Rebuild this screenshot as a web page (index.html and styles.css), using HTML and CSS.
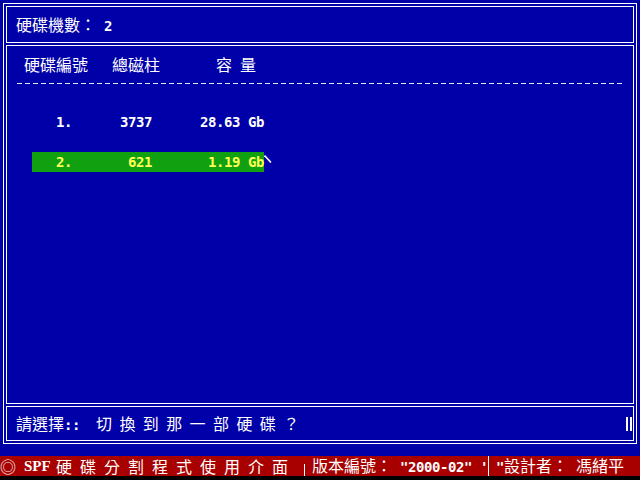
FILE: index.html
```html
<!DOCTYPE html>
<html lang="zh-Hant">
<head>
<meta charset="utf-8">
<title>SPF 硬碟分割程式</title>
<link rel="stylesheet" href="styles.css">
</head>
<body>
<div class="frame">
  <div class="box hdr"><span class="txt">硬碟機數：<span class="m"> 2</span></span></div>
  <div class="box main">
    <div class="cols">
      <span class="col1">硬碟編號</span>
      <span class="col2">總磁柱</span>
      <span class="col3">容<span class="m"> </span>量</span>
    </div>
    <div class="dash"></div>
    <div class="rows">
      <div class="row">
        <div class="bar m"><span class="idx">1.</span><span class="cyl">3737</span><span class="size">28.63 Gb</span></div>
      </div>
      <div class="row sel">
        <div class="bar m"><span class="idx">2.</span><span class="cyl">621</span><span class="size">1.19 Gb</span></div>
        <svg class="ptr" width="8" height="20" viewBox="0 0 8 20"><path d="M0.5 3.5 L7 10.5" stroke="#fff" stroke-width="1.6" fill="none"/></svg>
      </div>
    </div>
  </div>
  <div class="box prm">
    <span class="txt">請選擇<span class="m">::</span><span class="ask">切換到那一部硬碟？</span></span>
    <span class="cursor"><i></i><i></i></span>
  </div>
</div>
<div class="foot">
  <span class="logo">◎</span>
  <span class="spf">SPF</span>
  <span class="title">硬碟分割程式使用介面</span>
  <span class="vb"></span>
  <span class="txt">版本編號：<span class="m"> "2000-02" '</span></span>
  <span class="vb tall"></span>
  <span class="txt"><span class="m">"</span>設計者：<span class="m"> </span>馮緒平</span>
</div>
<div class="bottom"></div>
</body>
</html>
```

FILE: styles.css
```css
* { box-sizing: border-box; margin: 0; padding: 0; }
html, body { width: 640px; height: 480px; overflow: hidden; }
body {
  background: #0000a8;
  color: #fff;
  font-family: "Noto Sans CJK TC", "Liberation Mono", monospace;
  font-size: 16px;
  line-height: 16px;
  display: flex;
  flex-direction: column;
}
.txt { white-space: pre; }
.m {
  font-family: "DejaVu Sans Mono", monospace;
  font-weight: bold;
  font-size: 14px;
  letter-spacing: -0.43px;
  white-space: pre;
}
.frame {
  margin: 3px 3px 0 3px;
  height: 441px;
  border: 1px solid #fff;
  padding: 2px;
  display: flex;
  flex-direction: column;
  gap: 2px;
}
.box { border: 1px solid #fff; }
.hdr {
  height: 37px;
  display: flex;
  align-items: center;
  padding: 1px 0 0 9px;
}
.main { height: 359px; padding-top: 10px; }
.cols { display: flex; height: 16px; padding-left: 17px; }
.col1 { width: 88px; }
.col2 { width: 104px; }
.dash {
  margin: 11px 0 0 10px;
  width: 606px;
  height: 1px;
  background: repeating-linear-gradient(90deg, #e8e8ff 0 5px, transparent 5px 8px);
}
.rows {
  margin: 28px 0 0 25px;
  display: flex;
  flex-direction: column;
  gap: 20px;
}
.row { display: flex; align-items: center; height: 20px; }
.bar { display: flex; align-items: center; width: 232px; height: 20px; }
.sel .bar { background: #10a010; color: #ffff55; }
.idx { width: 40px; padding-left: 24px; }
.cyl { width: 80px; text-align: right; }
.size { width: 112px; text-align: right; }
.ptr { display: block; }
.prm {
  height: 35px;
  display: flex;
  align-items: center;
  padding-left: 9px;
}
.ask { margin-left: 16px; letter-spacing: 7.4px; display: inline-block; }
.cursor {
  margin-left: auto;
  margin-right: 1px;
  display: flex;
  gap: 2px;
  height: 14px;
}
.cursor i { display: block; width: 2px; height: 14px; background: #fff; }
.foot {
  margin-top: 12px;
  height: 20px;
  background: #a80000;
  display: flex;
  align-items: center;
  white-space: pre;
}
.logo { width: 16px; text-align: center; }
.spf {
  width: 40px;
  padding-left: 8px;
  font-family: "Liberation Serif", serif;
  font-weight: bold;
  font-size: 15px;
}
.title { letter-spacing: 8px; width: 248px; }
.vb {
  align-self: flex-end;
  width: 8px;
  height: 12px;
  border-left: 1px solid #fff;
}
.vb.tall { height: 20px; }
.bottom { flex: 1; background: #000; }
```
